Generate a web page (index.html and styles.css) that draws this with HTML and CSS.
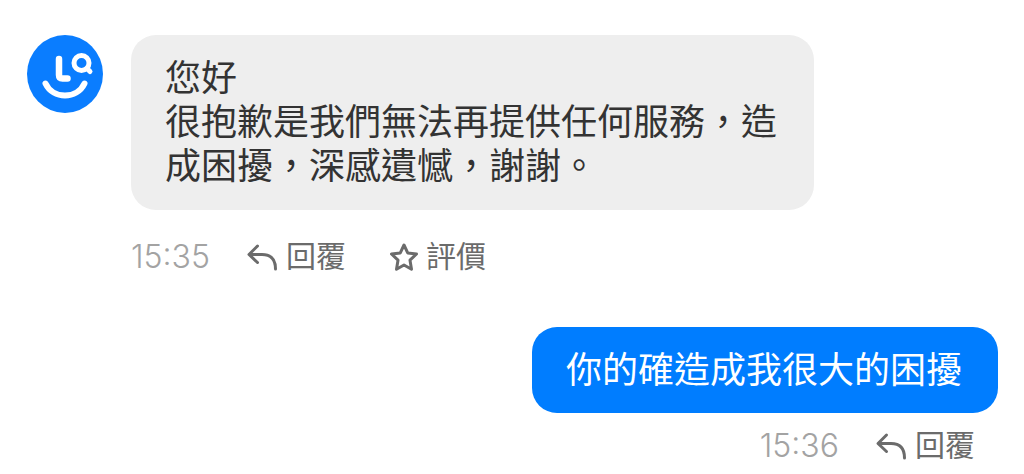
FILE: index.html
```html
<!DOCTYPE html>
<html lang="zh-Hant">
<head>
<meta charset="utf-8">
<meta name="viewport" content="width=device-width, initial-scale=1">
<title>對話</title>
<link rel="stylesheet" href="styles.css">
</head>
<body>
<main class="chat">
  <article class="message message-in">
    <svg class="avatar" viewBox="0 0 76 78" role="img" aria-label="客服">
      <ellipse cx="38" cy="39" rx="38" ry="39" fill="#0a7dff"/>
      <g fill="none" stroke="#fff" stroke-linecap="round" stroke-linejoin="round">
        <path d="M32 24V40Q32 43.500 35.500 43.500H40.500" stroke-width="6.500"/>
        <circle cx="54.500" cy="28" r="7.500" stroke-width="5"/>
        <path d="M60 33.500L63 36.500" stroke-width="5"/>
        <path d="M18.500 48.500C26 64.500 50 64.500 57.500 48.500" stroke-width="6"/>
      </g>
    </svg>
    <div class="body">
      <p class="bubble">您好<br>很抱歉是我們無法再提供任何服務，造成困擾，深感遺憾，謝謝。</p>
      <footer class="meta">
        <time class="time" datetime="15:35">15:35</time>
        <button class="action" type="button">
          <svg class="icon icon-reply" viewBox="0 0 32 28" aria-hidden="true"><path d="M11.500 3L3 11.500L11.500 19.500M3.500 11.500H16Q29.500 11.500 29.500 26"/></svg>
          <span>回覆</span>
        </button>
        <button class="action action-rate" type="button">
          <svg class="icon icon-star" viewBox="0 0 28 28" aria-hidden="true"><path d="M14 2L17.700 9.900L26.500 11L20 17.200L21.500 26.200L14 22L6.500 26.200L8 17.200L1.500 11L10.300 9.900Z"/></svg>
          <span>評價</span>
        </button>
      </footer>
    </div>
  </article>
  <article class="message message-out">
    <div class="body">
      <p class="bubble">你的確造成我很大的困擾</p>
      <footer class="meta">
        <time class="time" datetime="15:36">15:36</time>
        <button class="action" type="button">
          <svg class="icon icon-reply" viewBox="0 0 32 28" aria-hidden="true"><path d="M11.500 3L3 11.500L11.500 19.500M3.500 11.500H16Q29.500 11.500 29.500 26"/></svg>
          <span>回覆</span>
        </button>
      </footer>
    </div>
  </article>
</main>
</body>
</html>
```

FILE: styles.css
```css
* {
  box-sizing: border-box;
}

body {
  margin: 0;
  background: #fff;
  color: #333;
  font-family: "Liberation Sans", "Noto Sans CJK TC", sans-serif;
}

.chat {
  display: flex;
  flex-direction: column;
  gap: 48px;
  min-height: 100vh;
  padding: 35px 26px 5px 27px;
}

.message {
  display: flex;
  align-items: flex-start;
  gap: 28px;
}

.message-out {
  justify-content: flex-end;
}

.avatar {
  flex: none;
  width: 76px;
  height: 78px;
}

.bubble {
  max-width: 683px;
  margin: 0;
  padding: 22px 36px 21px 34px;
  border-radius: 25px;
  background: #eee;
  font-size: 36px;
  line-height: 44px;
}

.message-out .bubble {
  padding-bottom: 20px;
  background: #007dff;
  color: #fff;
}

.meta {
  display: flex;
  align-items: center;
  gap: 36px;
  margin-top: 25px;
}

.message-out .meta {
  justify-content: flex-end;
  margin-top: 11px;
  padding-right: 23px;
}

.time {
  color: #a3a3a3;
  font-family: Inter, sans-serif;
  font-size: 32px;
  font-weight: 300;
  line-height: 44px;
}

.action {
  display: flex;
  align-items: center;
  gap: 8px;
  padding: 0;
  border: 0;
  background: none;
  color: #6b6b6b;
  font: inherit;
  font-size: 30px;
  line-height: 44px;
  cursor: pointer;
}

.action-rate {
  margin-left: 8px;
}

.icon {
  fill: none;
  stroke: currentColor;
  stroke-width: 3;
  stroke-linecap: round;
  stroke-linejoin: round;
}

.icon-reply {
  width: 32px;
  height: 28px;
}

.icon-star {
  width: 28px;
  height: 28px;
}
```
